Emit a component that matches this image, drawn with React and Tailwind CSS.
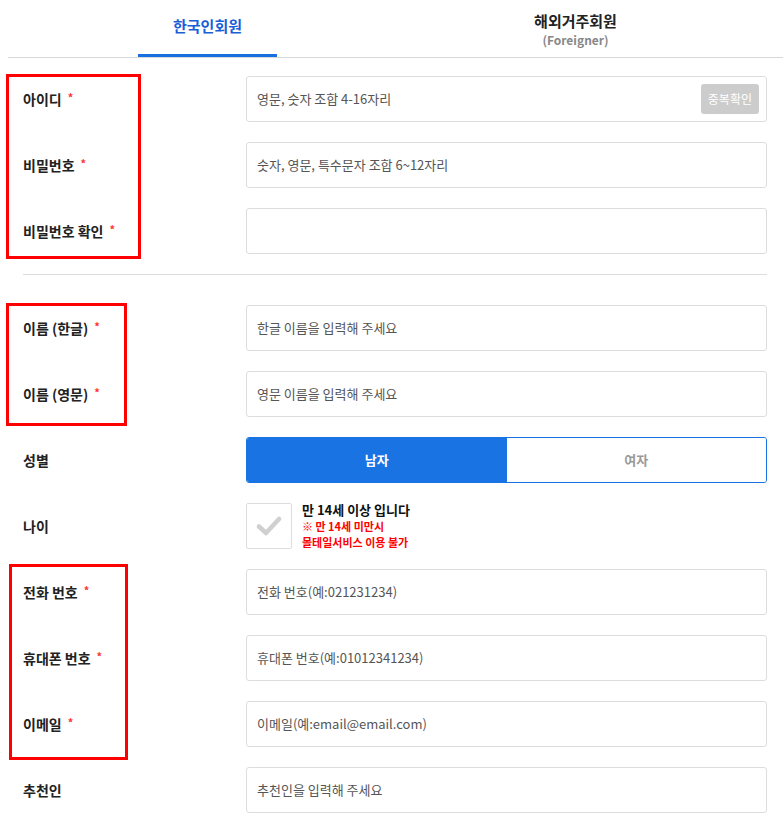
import React, { useState } from "react";

const font = { fontFamily: '"Noto Sans CJK KR", "Noto Sans", sans-serif' };

function Star() {
  return <span className="ml-[6px] text-[11px] text-[#f33] align-top">*</span>;
}

function Row({ label, required, children }) {
  return (
    <div className="flex items-center h-[46px]">
      <div className="w-[223px] text-[14px] font-bold text-[#222]">
        {label}
        {required && <Star />}
      </div>
      <div className="flex-1">{children}</div>
    </div>
  );
}

function Field({ placeholder, button }) {
  return (
    <div className="flex items-center h-[46px] border border-[#dddddd] rounded-[3px] pl-[10px] pr-[7px] bg-white">
      <input
        type="text"
        placeholder={placeholder}
        className="flex-1 outline-none text-[13px] text-[#333] placeholder:text-[#555] bg-transparent"
      />
      {button && (
        <button className="h-[30px] px-[7px] rounded-[3px] bg-[#cccccc] text-white text-[12px]">
          {button}
        </button>
      )}
    </div>
  );
}

export default function App() {
  const [gender, setGender] = useState("m");
  return (
    <div className="relative w-[783px] bg-white pl-[8px] pb-[10px]" style={font}>
      {/* Tabs */}
      <div className="flex border-b border-[#d8d8dc] h-[58px]">
        <div className="ml-[130px] w-[139px] flex items-center justify-center border-b-[3px] border-[#1a6fe0] text-[15px] font-bold text-[#1a5fd8] pb-[2px]">
          한국인회원
        </div>
        <div className="ml-[229px] w-[139px] flex flex-col items-center pt-[10px]">
          <span className="text-[15px] font-bold text-[#222] leading-[22px]">해외거주회원</span>
          <span className="text-[12px] font-bold text-[#888] leading-[16px]">(Foreigner)</span>
        </div>
      </div>

      <div className="pl-[15px] pr-[16px] pt-[18px]">
        <div className="flex flex-col gap-[20px]">
          <Row label="아이디" required>
            <Field placeholder="영문, 숫자 조합 4-16자리" button="중복확인" />
          </Row>
          <Row label="비밀번호" required>
            <Field placeholder="숫자, 영문, 특수문자 조합 6~12자리" />
          </Row>
          <Row label="비밀번호 확인" required>
            <Field placeholder="" />
          </Row>
        </div>

        <div className="border-t border-[#dddddd] mt-[20px] mb-[30px]" />

        <div className="flex flex-col gap-[20px]">
          <Row label="이름 (한글)" required>
            <Field placeholder="한글 이름을 입력해 주세요" />
          </Row>
          <Row label="이름 (영문)" required>
            <Field placeholder="영문 이름을 입력해 주세요" />
          </Row>
          <Row label="성별">
            <div className="flex h-[46px] border border-[#1a73e3] rounded-[3px] overflow-hidden">
              <button
                onClick={() => setGender("m")}
                className={
                  gender === "m"
                    ? "flex-1 bg-[#1a73e3] text-white text-[13px] font-bold"
                    : "flex-1 bg-white text-[#999] text-[13px] font-bold"
                }
              >
                남자
              </button>
              <button
                onClick={() => setGender("f")}
                className={
                  gender === "f"
                    ? "flex-1 bg-[#1a73e3] text-white text-[13px] font-bold"
                    : "flex-1 bg-white text-[#999] text-[13px] font-bold"
                }
              >
                여자
              </button>
            </div>
          </Row>
          <Row label="나이">
            <div className="flex items-start">
              <div className="w-[46px] h-[46px] border border-[#dddddd] rounded-[2px] flex items-center justify-center">
                <svg width="26" height="20" viewBox="0 0 26 20">
                  <path d="M3 10.5 L10 17 L23 3" fill="none" stroke="#d0d0d0" strokeWidth="4.5" strokeLinecap="round" strokeLinejoin="round" />
                </svg>
              </div>
              <div className="ml-[10px] -mt-[2px] flex flex-col">
                <span className="text-[13px] font-bold text-[#111] leading-[17px]">만 14세 이상 입니다</span>
                <span className="text-[11px] font-bold text-[#ff0000] leading-[16px]">※ 만 14세 미만시</span>
                <span className="text-[11px] font-bold text-[#ff0000] leading-[16px]">몰테일서비스 이용 불가</span>
              </div>
            </div>
          </Row>
          <Row label="전화 번호" required>
            <Field placeholder="전화 번호(예:021231234)" />
          </Row>
          <Row label="휴대폰 번호" required>
            <Field placeholder="휴대폰 번호(예:01012341234)" />
          </Row>
          <Row label="이메일" required>
            <Field placeholder="이메일(예:email@email.com)" />
          </Row>
          <Row label="추천인">
            <Field placeholder="추천인을 입력해 주세요" />
          </Row>
        </div>
      </div>

      {/* annotation boxes */}
      <div className="absolute left-[6px] top-[74px] w-[135px] h-[185px] border-[3px] border-[#ff0000] pointer-events-none" />
      <div className="absolute left-[6px] top-[303px] w-[121px] h-[123px] border-[3px] border-[#ff0000] pointer-events-none" />
      <div className="absolute left-[9px] top-[564px] w-[119px] h-[196px] border-[3px] border-[#ff0000] pointer-events-none" />
    </div>
  );
}
